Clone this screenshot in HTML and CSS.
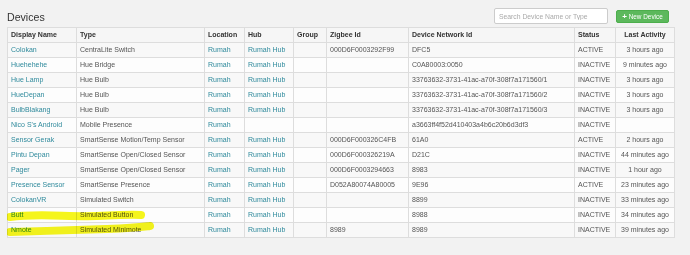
FILE: index.html
```html
<!DOCTYPE html>
<html>
<head>
<meta charset="utf-8">
<link rel="stylesheet" href="styles.css">
</head>
<body>
<div class="page">
  <div class="topbar">
    <h1 class="title">Devices</h1>
    <div class="tools">
      <input class="search" type="text" placeholder="Search Device Name or Type">
      <button class="btn-new"><span class="plus">+</span> New Device</button>
    </div>
  </div>
  <div class="table-wrap">
    <table class="devices">
      <colgroup>
        <col class="c-name"><col class="c-type"><col class="c-loc"><col class="c-hub"><col class="c-group"><col class="c-zig"><col class="c-dni"><col class="c-status"><col class="c-act">
      </colgroup>
      <thead>
        <tr><th>Display Name</th><th>Type</th><th>Location</th><th>Hub</th><th>Group</th><th>Zigbee Id</th><th>Device Network Id</th><th>Status</th><th class="act">Last Activity</th></tr>
      </thead>
      <tbody>
        <tr><td><a>Colokan</a></td><td>CentraLite Switch</td><td><a>Rumah</a></td><td><a>Rumah Hub</a></td><td></td><td>000D6F0003292F99</td><td>DFC5</td><td>ACTIVE</td><td class="act">3 hours ago</td></tr>
        <tr><td><a>Huehehehe</a></td><td>Hue Bridge</td><td><a>Rumah</a></td><td><a>Rumah Hub</a></td><td></td><td></td><td>C0A80003:0050</td><td>INACTIVE</td><td class="act">9 minutes ago</td></tr>
        <tr><td><a>Hue Lamp</a></td><td>Hue Bulb</td><td><a>Rumah</a></td><td><a>Rumah Hub</a></td><td></td><td></td><td>33763632-3731-41ac-a70f-308f7a171560/1</td><td>INACTIVE</td><td class="act">3 hours ago</td></tr>
        <tr><td><a>HueDepan</a></td><td>Hue Bulb</td><td><a>Rumah</a></td><td><a>Rumah Hub</a></td><td></td><td></td><td>33763632-3731-41ac-a70f-308f7a171560/2</td><td>INACTIVE</td><td class="act">3 hours ago</td></tr>
        <tr><td><a>BulbBlakang</a></td><td>Hue Bulb</td><td><a>Rumah</a></td><td><a>Rumah Hub</a></td><td></td><td></td><td>33763632-3731-41ac-a70f-308f7a171560/3</td><td>INACTIVE</td><td class="act">3 hours ago</td></tr>
        <tr><td><a>Nico S's Android</a></td><td>Mobile Presence</td><td><a>Rumah</a></td><td></td><td></td><td></td><td>a3663ff4f52d410403a4b6c20b6d3df3</td><td>INACTIVE</td><td class="act"></td></tr>
        <tr><td><a>Sensor Gerak</a></td><td>SmartSense Motion/Temp Sensor</td><td><a>Rumah</a></td><td><a>Rumah Hub</a></td><td></td><td>000D6F000326C4FB</td><td>61A0</td><td>ACTIVE</td><td class="act">2 hours ago</td></tr>
        <tr><td><a>Pintu Depan</a></td><td>SmartSense Open/Closed Sensor</td><td><a>Rumah</a></td><td><a>Rumah Hub</a></td><td></td><td>000D6F000326219A</td><td>D21C</td><td>INACTIVE</td><td class="act">44 minutes ago</td></tr>
        <tr><td><a>Pager</a></td><td>SmartSense Open/Closed Sensor</td><td><a>Rumah</a></td><td><a>Rumah Hub</a></td><td></td><td>000D6F0003294663</td><td>8983</td><td>INACTIVE</td><td class="act">1 hour ago</td></tr>
        <tr><td><a>Presence Sensor</a></td><td>SmartSense Presence</td><td><a>Rumah</a></td><td><a>Rumah Hub</a></td><td></td><td>D052A80074A80005</td><td>9E96</td><td>ACTIVE</td><td class="act">23 minutes ago</td></tr>
        <tr><td><a>ColokanVR</a></td><td>Simulated Switch</td><td><a>Rumah</a></td><td><a>Rumah Hub</a></td><td></td><td></td><td>8899</td><td>INACTIVE</td><td class="act">33 minutes ago</td></tr>
        <tr><td><a>Butt</a></td><td>Simulated Button</td><td><a>Rumah</a></td><td><a>Rumah Hub</a></td><td></td><td></td><td>8988</td><td>INACTIVE</td><td class="act">34 minutes ago</td></tr>
        <tr><td><a>Nmote</a></td><td>Simulated Minimote</td><td><a>Rumah</a></td><td><a>Rumah Hub</a></td><td></td><td>8989</td><td>8989</td><td>INACTIVE</td><td class="act">39 minutes ago</td></tr>
      </tbody>
    </table>
    <svg class="highlight" width="160" height="45" viewBox="0 0 160 45">
      <path d="M3 16 C 30 12, 60 16, 90 15 S 125 13, 134 14" />
      <path d="M3 31 C 35 30, 70 29, 100 28 S 135 26, 143 25" />
    </svg>
  </div>
</div>
</body>
</html>
```
FILE: styles.css
```css
html, body {
  margin: 0;
  padding: 0;
  background: #f2f2f2;
  font-family: "Liberation Sans", Arial, sans-serif;
  color: #555;
}
.page {
  width: 666px;
  padding-left: 7px;
}
.topbar {
  display: flex;
  justify-content: space-between;
  align-items: flex-start;
  height: 27px;
}
.title {
  margin: 0;
  padding-top: 11px;
  font-size: 10.6px;
  line-height: 12px;
  font-weight: normal;
  color: #333;
}
.tools {
  display: flex;
  align-items: center;
  gap: 8px;
  padding-top: 8px;
  margin-right: 4px;
}
.search {
  box-sizing: border-box;
  width: 114px;
  height: 16px;
  margin: 0;
  padding: 0 4px;
  border: 1px solid #ccc;
  border-radius: 2px;
  background: #fff;
  font-family: "Liberation Sans", Arial, sans-serif;
  font-size: 6.8px;
  color: #555;
}
.search::placeholder {
  color: #aaa;
}
.btn-new {
  box-sizing: border-box;
  width: 53px;
  height: 13px;
  margin: 0;
  padding: 0;
  border: 1px solid #4cae4c;
  border-radius: 2px;
  background: #5cb85c;
  color: #fff;
  font-family: "Liberation Sans", Arial, sans-serif;
  font-size: 6.4px;
  line-height: 11px;
  text-align: center;
}
.plus {
  font-weight: bold;
  font-size: 8px;
}
.table-wrap {
  position: relative;
}
.devices {
  width: 667px;
  table-layout: fixed;
  border-collapse: collapse;
  font-size: 7px;
}
.c-name { width: 69px; }
.c-type { width: 128px; }
.c-loc { width: 40px; }
.c-hub { width: 49px; }
.c-group { width: 33px; }
.c-zig { width: 82px; }
.c-dni { width: 166px; }
.c-status { width: 41px; }
.c-act { width: 59px; }
.devices th, .devices td {
  border: 1px solid #ddd;
  height: 14px;
  padding: 0 0 0 3px;
  line-height: 14px;
  white-space: nowrap;
  overflow: hidden;
  text-align: left;
  vertical-align: middle;
}
.devices th {
  font-weight: bold;
  color: #333;
  background: #f6f6f6;
}
.devices th.act, .devices td.act {
  text-align: center;
  padding: 0;
}
.devices tbody tr:nth-child(odd) td {
  background: #f8f8f8;
}
.devices tbody tr:nth-child(even) td {
  background: #fdfdfd;
}
.devices a {
  color: #2f8a9c;
  text-decoration: none;
}
.highlight {
  position: absolute;
  left: 0;
  top: 174px;
  pointer-events: none;
  mix-blend-mode: multiply;
}
.highlight path {
  fill: none;
  stroke: #f7f71c;
  stroke-width: 8;
  stroke-linecap: round;
}
```
